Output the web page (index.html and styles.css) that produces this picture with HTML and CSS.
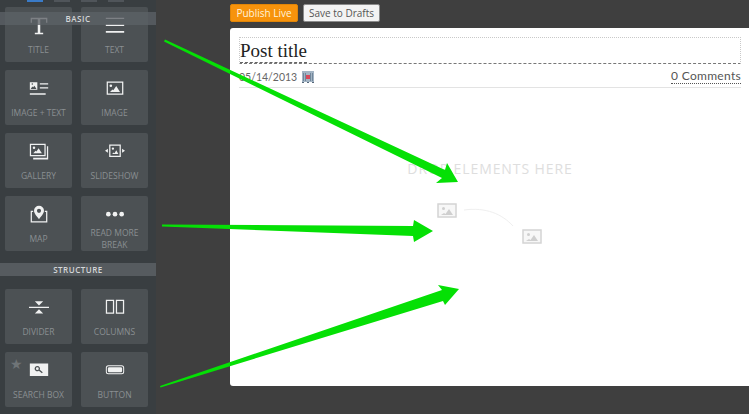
FILE: index.html
```html
<!DOCTYPE html>
<html lang="en">

<head>
    <meta charset="UTF-8">
    <meta name="viewport" content="width=device-width, initial-scale=1.0">
    <title>Post editor</title>
    <link rel="stylesheet" href="styles.css">
</head>

<body>
    <aside class="sidebar">
        <div class="tabs">
            <span class="tab active"></span>
            <span class="tab"></span>
            <span class="tab"></span>
            <span class="tab"></span>
        </div>
        <div class="section-title overlay">BASIC</div>
        <div class="tiles">
            <div class="tile">
                <svg class="icon" viewBox="0 0 24 24"><path d="M2 2h20v6h-1.500V4H13.500v16H17v2H7v-2h3.500V4H3.500v4H2z"/></svg>
                <span class="tile-label">TITLE</span>
            </div>
            <div class="tile">
                <svg class="icon" viewBox="0 0 24 24"><path d="M1 2h22v1.500H1zM1 10h22v2H1zM1 18h22v2H1z"/></svg>
                <span class="tile-label">TEXT</span>
            </div>
            <div class="tile">
                <svg class="icon" viewBox="0 0 24 24"><path fill-rule="evenodd" d="M1 4h9v9H1zM3 6a1 1 0 1 0 2 0 1 1 0 1 0-2 0zM2 12h7L6.500 8 5 10 4 9z"/><path d="M13 5h10v1.500H13zM13 10h10v1.500H13zM1 17h19v2H1z"/></svg>
                <span class="tile-label">IMAGE + TEXT</span>
            </div>
            <div class="tile">
                <svg class="icon" viewBox="0 0 24 24"><path fill-rule="evenodd" d="M2 3h20v16H2zM3.500 4.500v13h17v-13zM7 6.500a1.600 1.600 0 1 1 0 3.200 1.600 1.600 0 1 1 0-3.200zM6 15.500l3-3 1 1 3.500-5 4.500 7z"/></svg>
                <span class="tile-label">IMAGE</span>
            </div>
            <div class="tile">
                <svg class="icon" viewBox="0 0 24 24"><path fill-rule="evenodd" d="M1 2h19v15H1zM2.500 3.500v12h16v-12zM6 5.500a1.500 1.500 0 1 1 0 3 1.500 1.500 0 1 1 0-3zM5 13.500l3-3 1 1 2.500-4 4 6z"/><path d="M21.500 5H23v16H5v-2h16.500z"/></svg>
                <span class="tile-label">GALLERY</span>
            </div>
            <div class="tile">
                <svg class="icon" viewBox="0 0 24 24"><path fill-rule="evenodd" d="M5 3h14v15H5zM6.500 4.500v12h11v-12zM9.500 6.500a1.400 1.400 0 1 1 0 2.800 1.400 1.400 0 1 1 0-2.800zM8.500 14.500l2-2 1 1 2-3.500 2.500 4.500z"/><path d="M3.500 8v5L0 10.500zM20.500 8v5l3.500-2.500z"/></svg>
                <span class="tile-label">SLIDESHOW</span>
            </div>
            <div class="tile">
                <svg class="icon" viewBox="0 0 24 24"><path fill-rule="evenodd" d="M12 1a6 6 0 0 1 6 6c0 3-3.500 7-6 10-2.500-3-6-7-6-10a6 6 0 0 1 6-6zM12 4.500a2.500 2.500 0 1 0 0 5 2.500 2.500 0 1 0 0-5z"/><path d="M2 7h3v1.500H3.500v11h17v-11H19V7h3v14H2z"/></svg>
                <span class="tile-label">MAP</span>
            </div>
            <div class="tile">
                <svg class="icon" viewBox="0 0 24 24"><circle cx="4" cy="11" r="2.800"/><circle cx="12" cy="11" r="2.800"/><circle cx="20" cy="11" r="2.800"/></svg>
                <span class="tile-label">READ MORE BREAK</span>
            </div>
        </div>
        <div class="section-title">STRUCTURE</div>
        <div class="tiles">
            <div class="tile">
                <svg class="icon" viewBox="0 0 24 24"><path d="M0 10.500h24V12H0zM7 4h10l-5 5zM12 13.500l5 5H7z"/></svg>
                <span class="tile-label">DIVIDER</span>
            </div>
            <div class="tile">
                <svg class="icon" viewBox="0 0 24 24"><path fill-rule="evenodd" d="M1 2h10v17H1zM2.500 3.500v14h7v-14zM13 2h10v17H13zM14.500 3.500v14h7v-14z"/></svg>
                <span class="tile-label">COLUMNS</span>
            </div>
            <div class="tile">
                <span class="star">★</span>
                <svg class="icon" viewBox="0 0 24 24"><path fill-rule="evenodd" d="M1 3h22v15H1zM10 6a3.200 3.200 0 1 0 1.800 5.800l3.700 3 1-1.200-3.600-3A3.200 3.200 0 0 0 10 6zM10 7.500a1.700 1.700 0 1 1 0 3.400 1.700 1.700 0 1 1 0-3.400z"/></svg>
                <span class="tile-label">SEARCH BOX</span>
            </div>
            <div class="tile">
                <svg class="icon" viewBox="0 0 24 24"><path fill-rule="evenodd" d="M4 5h16a3 3 0 0 1 3 3v5a3 3 0 0 1-3 3H4a3 3 0 0 1-3-3V8a3 3 0 0 1 3-3zM4 6.200A1.800 1.800 0 0 0 2.200 8v5A1.800 1.800 0 0 0 4 14.800h16a1.800 1.800 0 0 0 1.800-1.800V8A1.800 1.800 0 0 0 20 6.200z"/><rect x="3.500" y="7.500" width="17" height="6" rx="1.500"/></svg>
                <span class="tile-label">BUTTON</span>
            </div>
        </div>
    </aside>

    <main class="main">
        <div class="toolbar">
            <button class="btn btn-publish">Publish Live</button>
            <button class="btn btn-save">Save to Drafts</button>
        </div>
        <div class="card">
            <div class="title-box">
                <h1 class="post-title">Post title</h1>
            </div>
            <div class="post-meta">
                <span class="post-date">05/14/2013</span>
                <svg class="calendar" viewBox="0 0 12 12"><rect width="12" height="11" fill="#a3b4c4"/><path d="M1 2h1v8H1zM3 2h1v8H3zM8 2h1v8H8zM10 2h1v8h-1z" fill="#71869a"/><rect x="4" y="4" width="4" height="4" fill="#d9485a"/><path d="M0 11h2v1H0zM5 11h2v1H5zM10 11h2v1h-2z" fill="#56687a"/></svg>
                <span class="comments">0 Comments</span>
            </div>
            <div class="drop-zone">
                <div class="drop-text">DROP ELEMENTS HERE</div>
                <svg class="drop-art" width="106" height="46" viewBox="0 0 106 46">
                    <path d="M27 9c22-3 38 4 49 16" fill="none" stroke="#efefef" stroke-width="1"/>
                    <g class="drop-img">
                        <rect x="1" y="3" width="18" height="13"/>
                        <circle cx="6.500" cy="7.500" r="1.500"/>
                        <path d="M4 14l3-2 1.500 1 3.500-5 4 6z"/>
                    </g>
                    <g class="drop-img" transform="translate(85 28)">
                        <rect x="1" y="1" width="18" height="13"/>
                        <circle cx="6.500" cy="5.500" r="1.500"/>
                        <path d="M4 12l3-2 1.500 1 3.500-5 4 6z"/>
                    </g>
                </svg>
            </div>
        </div>
    </main>

    <svg class="arrows" width="749" height="414" viewBox="0 0 749 414">
        <path d="M165 39.500L445 170 447 163 458 182 436 183 442 178 164 41.500z"/>
        <path d="M162 224.500L413 226 414 220 433 231 414 242 413 236 162 226.500z"/>
        <path d="M160 386L442 290 438 285 459 289 445 305 443 301 160.500 387.500z"/>
    </svg>
</body>

</html>
```

FILE: styles.css
```css
* {
    margin: 0;
    padding: 0;
    box-sizing: border-box;
}

body {
    display: flex;
    width: 749px;
    height: 414px;
    overflow: hidden;
    position: relative;
    background: #3f3f3f;
    font-family: 'Open Sans', sans-serif;
}

/* Sidebar */
.sidebar {
    position: relative;
    width: 156px;
    height: 414px;
    flex-shrink: 0;
    overflow: hidden;
    background: #393e41;
}

.tabs {
    display: flex;
    gap: 11px;
    height: 7px;
    padding-left: 27px;
}

.tab {
    width: 16px;
    height: 2px;
    background: #50555a;
}

.tab.active {
    background: #3a7bc8;
}

.section-title {
    height: 13px;
    margin: 12px 0 13px;
    background: #565b5f;
    color: #d4d6d8;
    font-size: 8px;
    font-weight: 600;
    line-height: 13px;
    letter-spacing: 0.5px;
    text-align: center;
}

.section-title.overlay {
    position: absolute;
    z-index: 2;
    top: 12px;
    left: 0;
    width: 100%;
    margin: 0;
    background: rgba(92, 98, 102, 0.78);
}

.tiles {
    display: grid;
    grid-template-columns: 67px 67px;
    grid-auto-rows: 55px;
    column-gap: 9px;
    row-gap: 8px;
    padding-left: 5px;
}

.tile {
    position: relative;
    display: flex;
    flex-direction: column;
    align-items: center;
    padding-top: 9px;
    background: #4c5154;
    border-radius: 2px;
}

.icon {
    width: 20px;
    height: 20px;
    fill: #f0f1f1;
    flex-shrink: 0;
}

/* fixed box so one and two line labels both centre on the same line */
.tile-label {
    display: flex;
    align-items: center;
    height: 26px;
    margin-top: 1px;
    color: #8a8f92;
    font-size: 8.500px;
    line-height: 12px;
    text-align: center;
}

.star {
    position: absolute;
    top: 5px;
    left: 5px;
    color: #6f7477;
    font-family: 'DejaVu Sans', sans-serif;
    font-size: 14px;
    line-height: 14px;
}

/* Editor */
.main {
    flex: 1;
    padding: 4px 0 0 74px;
}

.toolbar {
    display: flex;
    gap: 5px;
    height: 18px;
}

.btn {
    height: 18px;
    border-radius: 2px;
    font-family: 'Open Sans', sans-serif;
    font-size: 10px;
    line-height: 16px;
}

.btn-publish {
    width: 68px;
    background: #f7930c;
    border: 1px solid #e08508;
    color: #fff3dd;
}

.btn-save {
    width: 77px;
    background: #f3f3f3;
    border: 1px solid #8a8a8a;
    color: #555555;
}

.card {
    height: 358px;
    margin-top: 6px;
    padding: 9px 8px 0 9px;
    background: #ffffff;
    border-radius: 3px 0 0 3px;
}

.title-box {
    height: 27px;
    border: 1px dotted #c9c9c9;
    border-bottom: 1px dashed #777777;
}

.post-title {
    display: inline-block;
    height: 25px;
    color: #222222;
    font-family: 'Liberation Serif', serif;
    font-size: 19px;
    font-weight: 400;
    line-height: 25px;
    border-bottom: 1px dashed #666666;
}

.post-meta {
    display: flex;
    align-items: center;
    height: 24px;
    padding-top: 2px;
    border-bottom: 1px solid #e3e3e3;
    color: #666666;
    font-family: 'Lato', sans-serif;
    font-size: 12px;
    font-weight: 300;
}

.post-date {
    font-size: 10.500px;
    font-weight: 400;
}

.calendar {
    width: 12px;
    height: 12px;
    margin-left: 5px;
}

.comments {
    margin-left: auto;
    color: #555555;
    font-weight: 400;
    letter-spacing: 0.3px;
    line-height: 14px;
    border-bottom: 1px dotted #555555;
}

.drop-zone {
    display: flex;
    flex-direction: column;
    align-items: center;
    padding-top: 71px;
}

.drop-text {
    color: #dedede;
    font-size: 14px;
    line-height: 20px;
    letter-spacing: 0.9px;
}

.drop-art {
    display: block;
    margin-top: 22px;
}

.drop-img rect {
    fill: #f7f7f7;
    stroke: #d4d4d4;
    stroke-width: 1.500;
}

.drop-img circle,
.drop-img path {
    fill: #cfcfcf;
}

/* Green annotation arrows drawn over the screenshot */
.arrows {
    position: absolute;
    top: 0;
    left: 0;
    fill: #05e005;
    pointer-events: none;
}
```
